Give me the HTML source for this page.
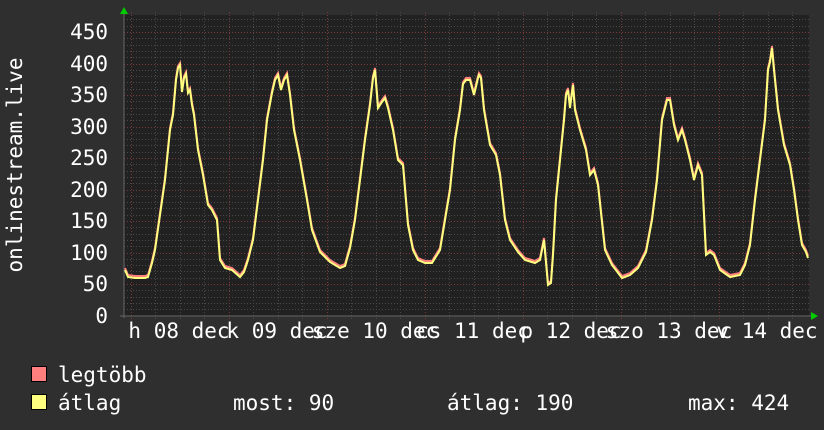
<!DOCTYPE html>
<html><head><meta charset="utf-8"><style>
html,body{margin:0;padding:0;background:#2f2f2f;}
body{width:824px;height:430px;overflow:hidden;position:relative;font-family:"DejaVu Sans Mono","Liberation Mono",monospace;color:#fff;}
svg{position:absolute;left:0;top:0;}
text{font-family:"DejaVu Sans Mono","Liberation Mono",monospace;fill:#fff;font-size:21px;}
</style></head><body>
<svg width="824" height="430" viewBox="0 0 824 430">
<rect x="124" y="15" width="685" height="301" fill="#212121"/>
<g id="grid"></g>
<line x1="124" y1="12" x2="124" y2="318" stroke="#666" stroke-width="1"/>
<line x1="120" y1="316" x2="812" y2="316" stroke="#666" stroke-width="1"/>
<polygon points="120,14 128,14 124,7" fill="#0c0"/>
<polygon points="811,312 811,320 818,316" fill="#0c0"/>
<g text-anchor="end">
<text x="108" y="39">450</text><text x="108" y="71">400</text><text x="108" y="102">350</text>
<text x="108" y="134">300</text><text x="108" y="165">250</text><text x="108" y="197">200</text>
<text x="108" y="228">150</text><text x="108" y="260">100</text><text x="108" y="291">50</text>
<text x="108" y="323">0</text>
</g>
<text transform="translate(22,165) rotate(-90)" text-anchor="middle">onlinestream.live</text>
<g text-anchor="middle">
<text x="179" y="338">h 08 dec</text><text x="277" y="338">k 09 dec</text>
<text x="375" y="338">sze 10 dec</text><text x="473" y="338">cs 11 dec</text>
<text x="571" y="338">p 12 dec</text><text x="669" y="338">szo 13 dec</text>
<text x="767" y="338">v 14 dec</text>
</g>
<polyline id="red" fill="none" stroke="#ff7f7f" stroke-width="2" transform="translate(0,-2)" points=""/>
<polyline id="yel" fill="none" stroke="#ffff7f" stroke-width="2" points=""/>
<rect x="31.5" y="366.5" width="15" height="15" fill="#ff7f7f" stroke="#000"/>
<rect x="31.5" y="394.5" width="15" height="15" fill="#ffff7f" stroke="#000"/>
<text x="58" y="382">legtöbb</text>
<text x="58" y="410">átlag</text>
<text x="233" y="410">most: 90</text>
<text x="447" y="410">átlag: 190</text>
<text x="688" y="410">max: 424</text>
</svg>
<script>
var ns="http://www.w3.org/2000/svg",g=document.getElementById("grid");
function ln(x1,y1,x2,y2,c){var l=document.createElementNS(ns,"line");l.setAttribute("x1",x1);l.setAttribute("y1",y1);l.setAttribute("x2",x2);l.setAttribute("y2",y2);l.setAttribute("stroke",c);l.setAttribute("stroke-width","1");l.setAttribute("stroke-dasharray","1,2");g.appendChild(l);}
for(var v=10;v<=470;v+=10){var y=Math.round(315.5-v*0.63)+0.5;ln(124,y,809,y,v%50==0?"#7a3a3a":"#4a4a4a");}
for(var x=130.5,i=0;x<809;x+=24.5,i++){var xx=Math.round(x)+0.5;ln(xx,12,xx,319,i%4==0?"#7a3a3a":"#4a4a4a");}
var pts="125,270 128,277 135,278 145,278 148,277 152,263 155,250 160,215 165,180 170,130 173,115 176,80 178,68 180,65 182,92 184,78 186,74 188,93 190,90 192,105 194,115 198,150 203,175 208,205 212,210 217,220 220,260 225,268 232,270 240,277 244,272 248,260 253,240 258,200 263,160 267,120 272,93 275,80 278,75 281,90 284,80 287,75 290,95 294,130 300,160 307,200 312,230 320,252 330,262 340,268 345,266 350,248 355,220 360,180 365,140 370,105 373,78 375,70 378,108 382,102 385,98 388,108 393,130 398,160 403,165 408,225 413,250 418,260 425,263 432,263 440,250 445,220 450,190 455,140 460,110 463,84 466,80 470,80 474,95 478,78 479,75 481,78 484,110 490,145 496,155 500,175 505,220 510,240 518,252 525,260 535,263 540,260 544,240 548,285 551,283 553,255 556,200 560,160 564,120 566,95 568,90 570,108 573,85 575,110 580,130 586,150 590,175 594,170 598,185 605,250 612,265 622,278 630,275 638,268 646,252 652,220 657,180 662,120 667,100 670,100 674,125 678,140 682,130 685,140 690,160 694,180 698,165 702,175 706,255 710,252 714,255 720,270 730,277 740,275 745,265 750,245 755,200 760,160 765,120 768,70 770,62 772,48 774,70 778,110 784,145 790,165 794,190 798,220 802,245 806,252 808,258";
document.getElementById("red").setAttribute("points",pts);
document.getElementById("yel").setAttribute("points",pts);
</script>
</body></html>
